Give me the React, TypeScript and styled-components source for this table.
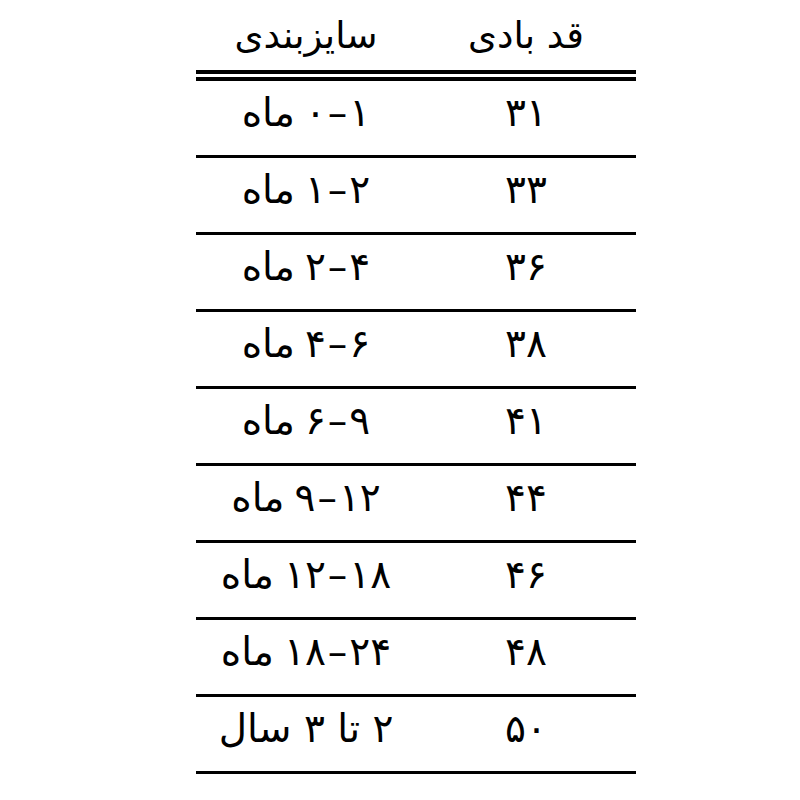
import React from "react";
import styled, { createGlobalStyle } from "styled-components";

const GlobalStyle = createGlobalStyle`
  html, body {
    margin: 0;
    padding: 0;
    background: #fff;
  }
  body {
    font-family: "DejaVu Sans", "Noto Sans", sans-serif;
    color: #000;
  }
`;

const Page = styled.div`
  width: 800px;
  height: 800px;
  display: flex;
  justify-content: center;
`;

const Table = styled.div`
  width: 440px;
  margin-left: 32px;
  display: flex;
  flex-direction: column;
`;

const HeaderRow = styled.div`
  display: grid;
  grid-template-columns: 1fr 1fr;
  height: 70px;
  border-bottom: 11px double #000;
`;

const Row = styled.div`
  display: grid;
  grid-template-columns: 1fr 1fr;
  height: 74px;
  border-bottom: 3px solid #000;
`;

const Cell = styled.div<{ $head?: boolean }>`
  display: flex;
  align-items: center;
  justify-content: center;
  gap: 10px;
  font-size: ${(p) => (p.$head ? "37px" : "39px")};
  padding-bottom: ${(p) => (p.$head ? "0px" : "12px")};
  white-space: nowrap;
`;

const Range = styled.bdi`
  direction: ltr;
  unicode-bidi: isolate;
`;

const Dash = styled.span`
  margin: 0 2px;
`;

const rows = [
  { height: "۳۱", from: "۰", to: "۱", unit: "ماه" },
  { height: "۳۳", from: "۱", to: "۲", unit: "ماه" },
  { height: "۳۶", from: "۲", to: "۴", unit: "ماه" },
  { height: "۳۸", from: "۴", to: "۶", unit: "ماه" },
  { height: "۴۱", from: "۶", to: "۹", unit: "ماه" },
  { height: "۴۴", from: "۹", to: "۱۲", unit: "ماه" },
  { height: "۴۶", from: "۱۲", to: "۱۸", unit: "ماه" },
  { height: "۴۸", from: "۱۸", to: "۲۴", unit: "ماه" },
];

export default function App() {
  return (
    <>
      <GlobalStyle />
      <Page>
        <Table dir="rtl">
          <HeaderRow>
            <Cell $head>قد بادی</Cell>
            <Cell $head>سایزبندی</Cell>
          </HeaderRow>
          {rows.map((item) => (
            <Row key={item.height}>
              <Cell>{item.height}</Cell>
              <Cell>
                <Range>
                  {item.from}
                  <Dash>–</Dash>
                  {item.to}
                </Range>
                <span>{item.unit}</span>
              </Cell>
            </Row>
          ))}
          <Row>
            <Cell>۵۰</Cell>
            <Cell>۲ تا ۳ سال</Cell>
          </Row>
        </Table>
      </Page>
    </>
  );
}
